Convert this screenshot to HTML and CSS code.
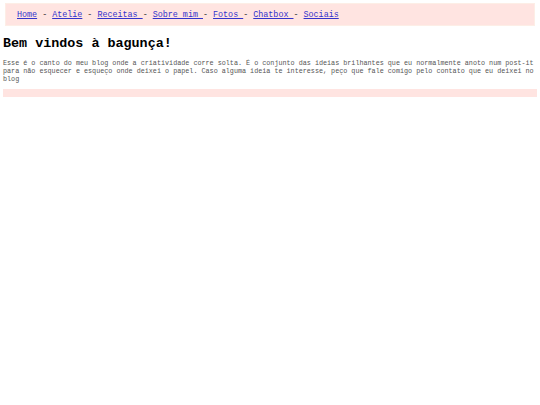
FILE: index.html
```html
<!DOCTYPE html>
<html>
<head>
<meta charset="utf-8">
<link rel="stylesheet" href="styles.css">
</head>
<body>
<div class="menu"><a href="#">Home</a> - <a href="#">Atelie</a> - <a href="#">Receitas </a>- <a href="#">Sobre mim </a>- <a href="#">Fotos </a>- <a href="#">Chatbox </a>- <a href="#">Sociais</a></div>
<h1 class="title">Bem vindos à bagunça!</h1>
<p class="intro">Esse é o canto do meu blog onde a criatividade corre solta. É o conjunto das ideias brilhantes que eu normalmente anoto num post-it para não esquecer e esqueço onde deixei o papel. Caso alguma ideia te interesse, peço que fale comigo pelo contato que eu deixei no blog</p>
<div class="footer"></div>
</body>
</html>
```
FILE: styles.css
```css
html, body {
  margin: 0;
  padding: 0;
  background: #fff;
}
body {
  padding: 3px 3px;
  font-family: "Liberation Mono", "DejaVu Sans Mono", monospace;
}
.menu {
  margin: 0 2px;
  height: 20px;
  padding: 1px 11px 0 11px;
  box-sizing: content-box;
  display: flex;
  align-items: center;
  white-space: pre;
  background: #ffe4e1;
  border: 1px solid #fdeee6;
  font-size: 8.4px;
  color: #333;
}
.menu a {
  color: #3333cc;
  text-decoration: underline;
}
.title {
  font-size: 13.4px;
  font-weight: bold;
  margin: 10px 0 0 0;
  line-height: 16px;
  color: #000;
}
.intro {
  font-size: 6.75px;
  line-height: 8px;
  color: #555;
  margin: 7px 0 0 0;
}
.footer {
  margin-top: 6px;
  height: 8px;
  background: #ffe4e1;
}
```
